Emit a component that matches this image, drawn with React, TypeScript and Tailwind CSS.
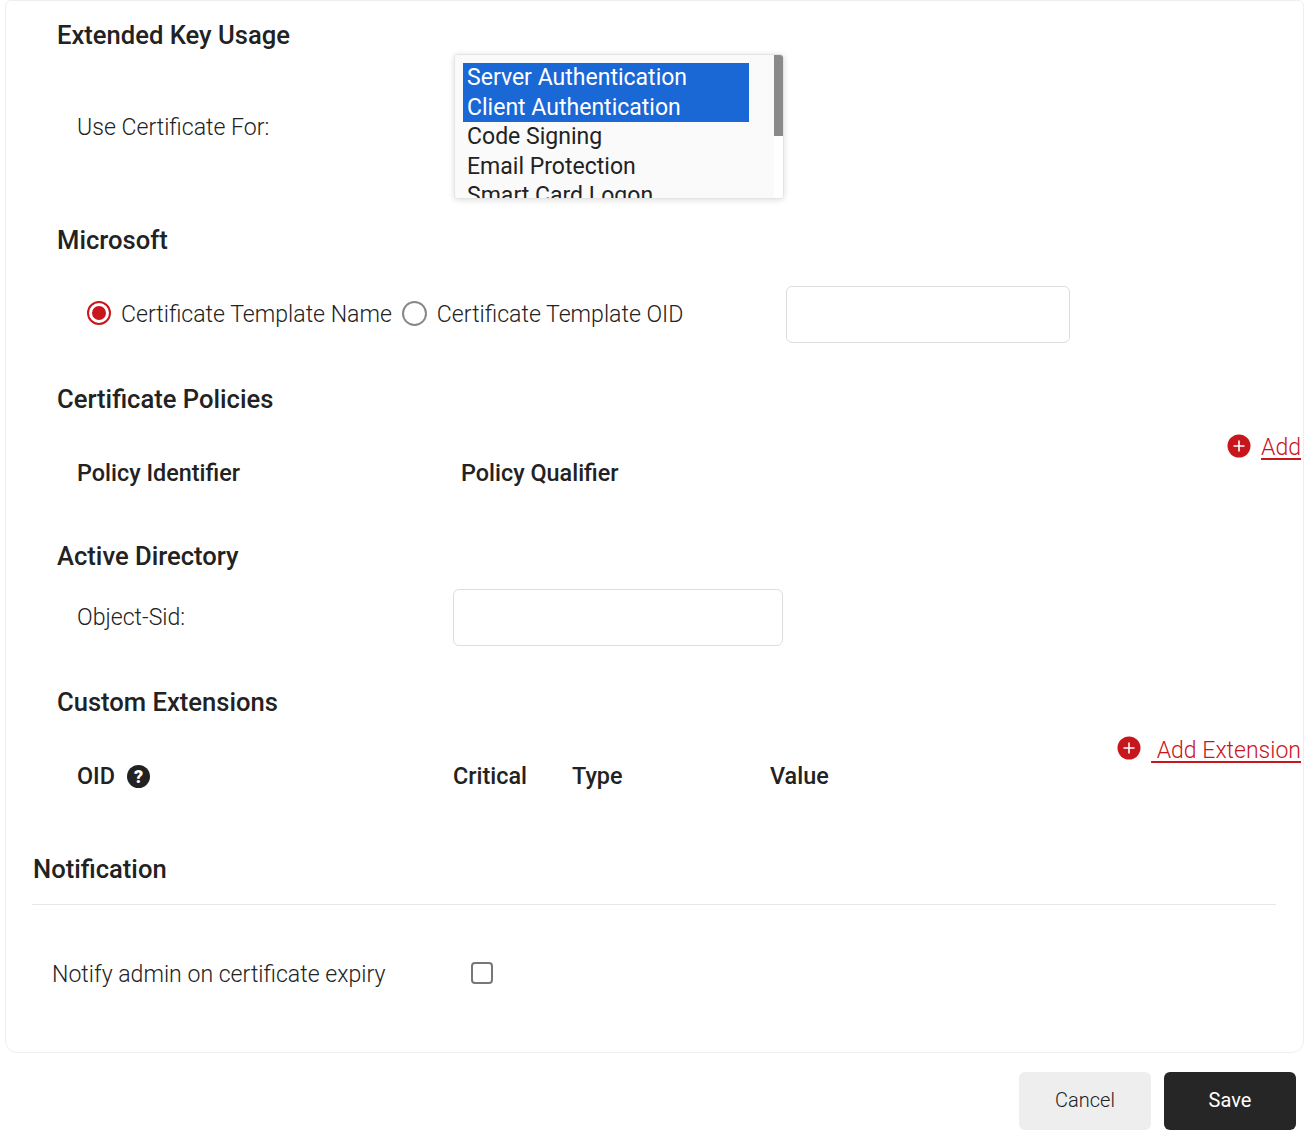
import React from "react";

function PlusCircle({ className }: { className: string }) {
  return (
    <svg width="24" height="24" viewBox="0 0 24 24" className={`shrink-0 ${className}`}>
      <circle cx="12" cy="12" r="11.5" fill="#c8161d" />
      <path d="M12 6.5v11M6.5 12h11" stroke="#fff" strokeWidth="1.6" />
    </svg>
  );
}

function SectionTitle({ children, className }: { children: React.ReactNode; className: string }) {
  return <h3 className={`text-[25.6px] leading-[30px] font-medium text-[#222] ${className}`}>{children}</h3>;
}

export default function App() {
  return (
    <div className="w-[1309px] h-[1143px] bg-white overflow-hidden font-['Roboto',sans-serif] text-[23.1px] text-[#222]">
      <div className="ml-[5px] w-[1299px] h-[1053px] border border-[#eeeeee] rounded-b-xl rounded-t-md pl-[51px]">
        <SectionTitle className="pt-[19px] box-content">Extended Key Usage</SectionTitle>

        <div className="flex items-start mt-[4px] h-[146px]">
          <label className="w-[397px] pl-[20px] font-light self-center pt-[2px]">Use Certificate For:</label>
          <div className="flex w-[330px] h-[145px] border border-[#e4e4e4] rounded-[4px] bg-white shadow-[0_1px_6px_rgba(0,0,0,0.14)] overflow-hidden">
            <div className="flex-1 bg-[#fafafa] pt-[8.3px] pl-[8px]">
              <div className="w-[286px] text-[23.04px] leading-[29.5px] whitespace-nowrap">
                <div className="bg-[#1a67d6] text-white pl-[4px]">Server Authentication</div>
                <div className="bg-[#1a67d6] text-white pl-[4px]">Client Authentication</div>
                <div className="pl-[4px]">Code Signing</div>
                <div className="pl-[4px]">Email Protection</div>
                <div className="pl-[4px]">Smart Card Logon</div>
              </div>
            </div>
            <div className="w-[9px] bg-white">
              <div className="h-[81px] bg-[#8a8a8a]"></div>
            </div>
          </div>
        </div>

        <SectionTitle className="mt-[25px]">Microsoft</SectionTitle>

        <div className="flex items-center mt-[31px] h-[57px] font-light">
          <div className="w-[24px] h-[24px] ml-[30px] -mt-[3px] rounded-full border-2 border-[#c8161d] flex items-center justify-center shrink-0">
            <div className="w-[14px] h-[14px] rounded-full bg-[#c8161d]"></div>
          </div>
          <span className="ml-[10px] pt-[2px] whitespace-nowrap">Certificate Template Name</span>
          <div className="w-[25px] h-[25px] ml-[10px] -mt-[3px] rounded-full border-2 border-[#888] shrink-0"></div>
          <span className="ml-[10px] pt-[2px] whitespace-nowrap">Certificate Template OID</span>
          <input className="ml-auto mr-[233px] w-[284px] h-[57px] border border-[#dddddd] rounded-[6px] bg-white" />
        </div>

        <SectionTitle className="mt-[41px]">Certificate Policies</SectionTitle>

        <div className="flex items-start h-[92px] mt-[19px] text-[23.4px]">
          <div className="w-[404px] pl-[20px] font-medium pt-[25px] leading-[30px]">Policy Identifier</div>
          <div className="font-medium pt-[25px] leading-[30px]">Policy Qualifier</div>
          <a className="ml-auto mr-[2px] flex items-center gap-[10px] h-[28px] text-[23.04px] text-[#c8161d] font-light leading-[28px] underline decoration-2 underline-offset-[3px]">
            <PlusCircle className="-mt-[2px]" />
            <span className="pt-[2px]">Add</span>
          </a>
        </div>

        <SectionTitle className="mt-[16px]">Active Directory</SectionTitle>

        <div className="flex items-center h-[57px] mt-[18px]">
          <label className="w-[396px] pl-[20px] pt-[2px] font-light">Object-Sid:</label>
          <input className="w-[330px] h-[57px] border border-[#dddddd] rounded-[6px] bg-white" />
        </div>

        <SectionTitle className="mt-[41px]">Custom Extensions</SectionTitle>

        <div className="flex items-start h-[76px] mt-[19px] font-medium text-[23.4px]">
          <div className="w-[396px] pl-[20px] pt-[25px] flex items-center gap-[12px] leading-[30px]">
            <span>OID</span>
            <span className="w-[23px] h-[23px] rounded-full bg-[#222] text-white text-[18px] leading-[23px] font-black text-center">?</span>
          </div>
          <div className="w-[119px] pt-[25px] leading-[30px]">Critical</div>
          <div className="w-[198px] pt-[25px] leading-[30px]">Type</div>
          <div className="pt-[25px] leading-[30px]">Value</div>
          <a className="ml-auto mr-[2px] flex items-center h-[28px] text-[23.04px] text-[#c8161d] font-light leading-[28px] underline decoration-2 underline-offset-[3px] whitespace-pre">
            <PlusCircle className="-mt-[4px]" />
            <span className="ml-[10px] pt-[2px]"> Add Extension</span>
          </a>
        </div>

        <div className="-ml-[25px] mr-[27px] mt-[42px] pb-[20px] border-b border-[#e8e8e8]">
          <h3 className="pl-[1px] text-[25.6px] leading-[30px] font-medium">Notification</h3>
        </div>

        <div className="-ml-[5px] flex items-center h-[30px] mt-[53px] font-light">
          <label className="w-[419px] pt-[4px]">Notify admin on certificate expiry</label>
          <div className="w-[22px] h-[22px] rounded-[4px] border-2 border-[#777] bg-white"></div>
        </div>
      </div>

      <div className="flex justify-end gap-[13px] mt-[19px] mr-[13px]">
        <button className="w-[132px] h-[58px] pb-[2px] rounded-[6px] bg-[#eeeeee] text-[20px] font-light text-[#222]">Cancel</button>
        <button className="w-[132px] h-[58px] pb-[2px] rounded-[6px] bg-[#262626] text-[20px] text-white">Save</button>
      </div>
    </div>
  );
}
